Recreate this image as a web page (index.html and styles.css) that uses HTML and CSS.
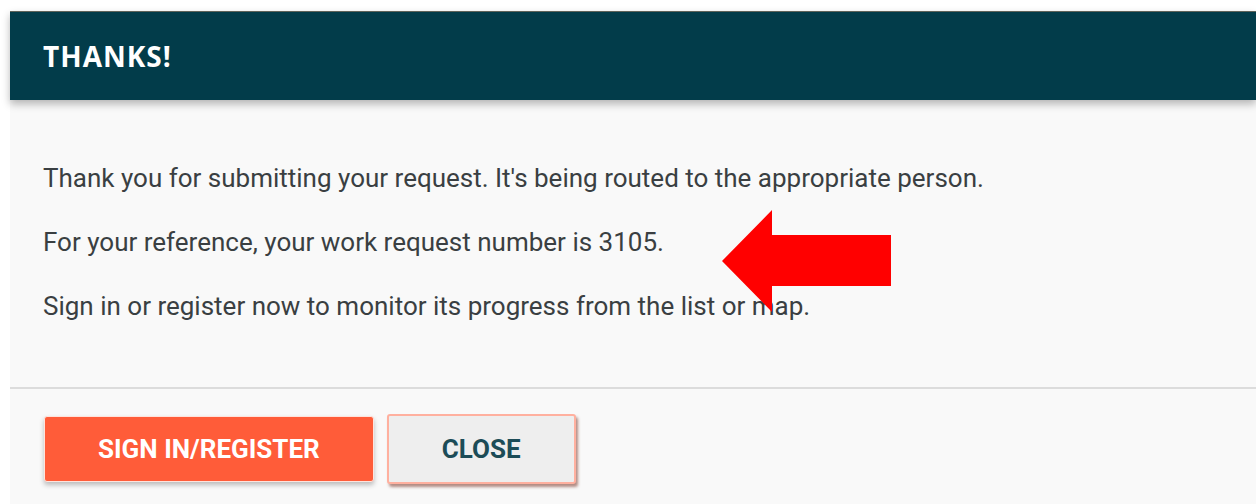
FILE: index.html
```html
<!DOCTYPE html>
<html lang="en">
<head>
<meta charset="utf-8">
<title>Thanks!</title>
<link rel="stylesheet" href="styles.css">
</head>
<body>
<div class="dialog">
  <header class="dialog-header">
    <h1 class="dialog-title">THANKS!</h1>
  </header>
  <section class="dialog-body">
    <p>Thank you for submitting your request. It's being routed to the appropriate person.</p>
    <p>For your reference, your work request number is 3105.</p>
    <p>Sign in or register now to monitor its progress from the list or map.</p>
  </section>
  <footer class="dialog-actions">
    <button class="btn btn-primary" type="button">SIGN IN/REGISTER</button>
    <button class="btn btn-secondary" type="button">CLOSE</button>
  </footer>
</div>
<svg class="callout-arrow" width="170" height="102" viewBox="0 0 170 102" aria-hidden="true">
  <polygon points="0,51 50,0 50,25 169,25 169,76 50,76 50,102" fill="#ff0000"/>
</svg>
</body>
</html>
```

FILE: styles.css
```css
html, body {
  margin: 0;
  padding: 0;
  background: #ffffff;
}

body {
  width: 1256px;
  height: 504px;
  overflow: hidden;
  position: relative;
  padding-top: 11px;
  box-sizing: border-box;
  font-family: Roboto, "Liberation Sans", Arial, sans-serif;
}

.dialog {
  margin-left: 10px;
  background: #f9f9f9;
  height: 493px;
}

.dialog-header {
  height: 89px;
  box-sizing: border-box;
  background: #023c4a;
  border-top: 1px solid #5f635a;
  display: flex;
  align-items: center;
  padding-left: 33px;
  box-shadow: 0 4px 8px rgba(0, 0, 0, 0.28);
  position: relative;
}

.dialog-title {
  margin: 0;
  color: #ffffff;
  font-family: "Open Sans", "Liberation Sans", sans-serif;
  font-weight: 700;
  font-size: 28px;
  letter-spacing: 1px;
}

.dialog-body {
  padding: 59px 33px 62px;
  border-bottom: 2px solid #dcdcdc;
  color: #3a3f42;
  font-size: 26px;
  line-height: 38px;
}

.dialog-body p {
  margin: 0 0 26px;
}

.dialog-body p:last-child {
  margin-bottom: 0;
}

.dialog-actions {
  display: flex;
  align-items: center;
  gap: 13px;
  padding: 25px 34px 0;
}

.btn {
  font-family: Roboto, "Liberation Sans", Arial, sans-serif;
  font-weight: 700;
  font-size: 26px;
  height: 66px;
  padding: 0 53px;
  border-radius: 3px;
  cursor: pointer;
}

.btn-primary {
  background: #ff5c39;
  color: #ffffff;
  border: 1px solid #ffe3dc;
  box-shadow: 0 3px 5px rgba(0, 0, 0, 0.25);
}

.btn-secondary {
  height: 70px;
  padding: 0 53px;
  background: #eeeeee;
  color: #1c4c57;
  border: 2px solid #ffb09f;
  box-shadow: 2px 3px 3px rgba(120, 50, 35, 0.55);
}

.callout-arrow {
  position: absolute;
  left: 722px;
  top: 210px;
}
```
